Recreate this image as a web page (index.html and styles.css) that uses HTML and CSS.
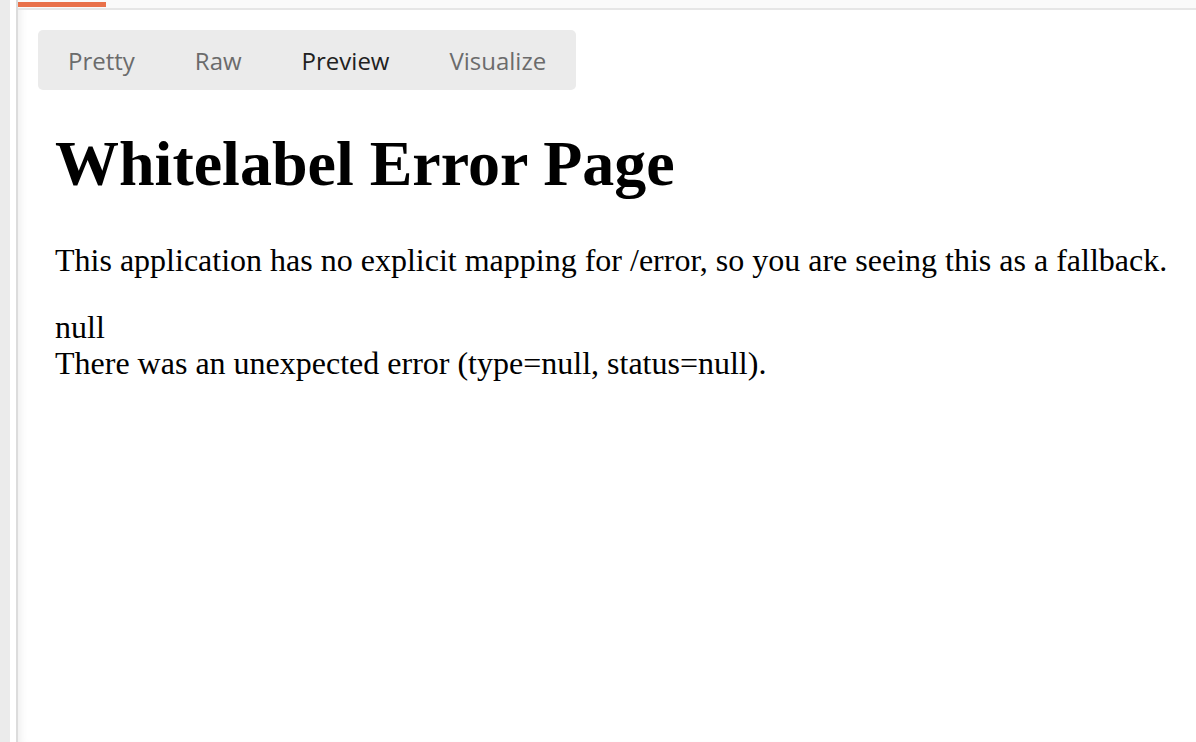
FILE: index.html
```html
<!DOCTYPE html>
<html lang="en">

<head>
    <meta charset="UTF-8">
    <meta name="viewport" content="width=device-width, initial-scale=1.0">
    <title>Preview</title>

    <link rel="stylesheet" href="styles.css">
</head>

<body>
    <div class="app">
        <!-- 左側邊欄 -->
        <div class="sideStrip"></div>
        <div class="sideGap"></div>

        <div class="panel">
            <div class="topBar">
                <div class="activeMark"></div>
            </div>

            <div class="panelBody">
                <div class="tabs">
                    <div class="tab">Pretty</div>
                    <div class="tab">Raw</div>
                    <div class="tab active">Preview</div>
                    <div class="tab">Visualize</div>
                </div>

                <!-- 預覽內容 -->
                <div class="preview">
                    <h1>Whitelabel Error Page</h1>
                    <p>This application has no explicit mapping for /error, so you are seeing this as a fallback.</p>
                    <div>null</div>
                    <div>There was an unexpected error (type=null, status=null).</div>
                </div>
            </div>
        </div>
    </div>
</body>

</html>
```

FILE: styles.css
```css
* {
    box-sizing: border-box;
}

body {
    margin: 0;
    background-color: white;
}

.app {
    display: flex;
    width: 100%;
    height: 100vh;
    overflow: hidden;
}

.sideStrip {
    width: 10px;
    background-color: #ebebeb;
}

.sideGap {
    width: 6px;
    background-color: white;
}

.panel {
    flex: 1;
    display: flex;
    flex-direction: column;
    border-left: 2px solid #dcdcdc;
    box-shadow: inset 8px 0 8px -6px rgba(0, 0, 0, 0.08);
}

.topBar {
    height: 10px;
    background-color: #fafafa;
    border-bottom: 2px solid #e6e6e6;
    padding-top: 2px;
}

.activeMark {
    width: 88px;
    height: 5px;
    background-color: #e9714a;
}

.panelBody {
    padding: 20px 0 0 20px;
}

.tabs {
    display: inline-flex;
    height: 60px;
    align-items: center;
    background-color: #ebebeb;
    border-radius: 5px;
}

.tab {
    padding: 0 30px;
    font-family: "Open Sans", sans-serif;
    font-size: 24px;
    color: #6b6b6b;
}

.tab.active {
    color: #212121;
}

.preview {
    padding-left: 17px;
    font-family: "Liberation Serif", "Times New Roman", serif;
    font-size: 32px;
    line-height: 36px;
    color: black;
}

.preview h1 {
    font-size: 64px;
    line-height: 72px;
    margin: 38px 0 42px;
}

.preview p {
    margin: 0 0 31px;
}
```
